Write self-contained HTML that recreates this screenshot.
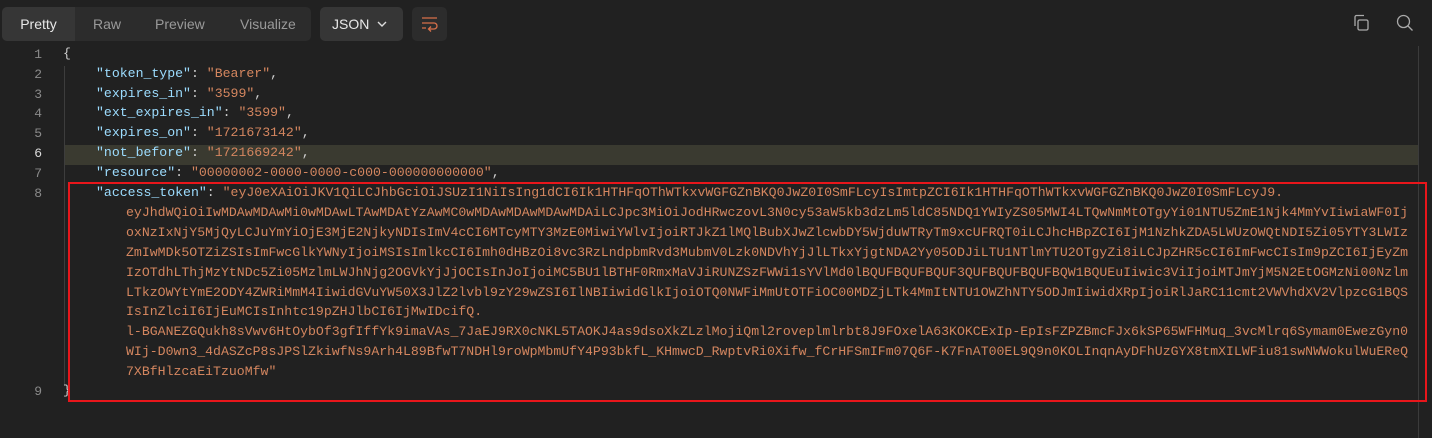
<!DOCTYPE html>
<html><head><meta charset="utf-8"><style>
html,body{margin:0;padding:0;width:1432px;height:438px;background:#212121;overflow:hidden}
body{position:relative;font-family:"Liberation Sans",sans-serif}
.tabs{position:absolute;left:2px;top:7px;width:309px;height:34px;background:#2c2c2c;border-radius:5px}
.tab{position:absolute;top:0;height:34px;line-height:34px;font-size:14px;color:#9a9a9a}
.tab.on{left:0;width:73px;background:#363636;border-radius:5px 0 0 5px;color:#e8e8e8;text-align:center}
.json{position:absolute;left:320px;top:7px;width:83px;height:34px;background:#363636;border-radius:5px;color:#e8e8e8;font-size:14px;line-height:34px}
.wrap{position:absolute;left:412px;top:7px;width:35px;height:34px;background:#2c2c2c;border-radius:5px}
.ln{position:absolute;left:0;width:42px;text-align:right;color:#8a8a8a;font-family:"Liberation Mono",monospace;font-size:13px}
.c{position:absolute;font-family:"Liberation Mono",monospace;font-size:13.2px;white-space:pre;color:#cfcfcf;letter-spacing:0.0px}
.k{color:#9cdcfe}.s{color:#d4865f}
.hl{position:absolute;left:64px;top:145px;width:1354px;height:20px;background:#3a3a30}
.guide{position:absolute;left:64px;top:66px;width:1px;height:320px;background:#3d3d3d}
.box{position:absolute;left:68px;top:182px;width:1355px;height:216px;border:2px solid #e8161b}
.sb{position:absolute;left:1418px;top:46px;width:1px;height:392px;background:#3b3b3b}
</style></head><body>
<div class="tabs">
<div class="tab on">Pretty</div>
<div class="tab" style="left:91px">Raw</div>
<div class="tab" style="left:153px">Preview</div>
<div class="tab" style="left:238px">Visualize</div>
</div>
<div class="json"><span style="margin-left:12px">JSON</span>
<svg style="position:absolute;left:57px;top:13px" width="10" height="8" viewBox="0 0 10 8"><path d="M1 2l4 4 4-4" fill="none" stroke="#ddd" stroke-width="1.4"/></svg></div>
<div class="wrap"><svg style="position:absolute;left:9px;top:9px" width="17" height="16" viewBox="0 0 17 16"><path d="M1 2h15M1 7h12a3 3 0 010 6H8M10 10.5l-2.5 2.5 2.5 2.5M1 12h4" fill="none" stroke="#d7704a" stroke-width="1.3"/></svg></div>
<svg style="position:absolute;left:1353px;top:14px" width="17" height="18" viewBox="0 0 17 18"><rect x="5" y="6" width="10" height="10" rx="1.5" fill="none" stroke="#aaa" stroke-width="1.3"/><path d="M2 12V3a1.5 1.5 0 011.5-1.5H11" fill="none" stroke="#aaa" stroke-width="1.3"/></svg>
<svg style="position:absolute;left:1396px;top:14px" width="18" height="18" viewBox="0 0 18 18"><circle cx="7.5" cy="7.5" r="6" fill="none" stroke="#aaa" stroke-width="1.3"/><path d="M12 12l4.5 4.5" stroke="#aaa" stroke-width="1.3"/></svg>
<div class="sb"></div>
<div class="hl"></div>
<div class="guide"></div>
<div class="ln" style="top:47px">1</div>
<div class="ln" style="top:67px">2</div>
<div class="ln" style="top:87px">3</div>
<div class="ln" style="top:106px">4</div>
<div class="ln" style="top:126px">5</div>
<div class="ln" style="top:146px;color:#ddd">6</div>
<div class="ln" style="top:166px">7</div>
<div class="ln" style="top:186px">8</div>
<div class="ln" style="top:384px">9</div>
<div class="c" style="left:63px;top:46px">{</div>
<div class="c" style="left:96px;top:66px"><span class="k">"token_type"</span>: <span class="s">"Bearer"</span>,</div>
<div class="c" style="left:96px;top:86px"><span class="k">"expires_in"</span>: <span class="s">"3599"</span>,</div>
<div class="c" style="left:96px;top:105px"><span class="k">"ext_expires_in"</span>: <span class="s">"3599"</span>,</div>
<div class="c" style="left:96px;top:125px"><span class="k">"expires_on"</span>: <span class="s">"1721673142"</span>,</div>
<div class="c" style="left:96px;top:145px"><span class="k">"not_before"</span>: <span class="s">"1721669242"</span>,</div>
<div class="c" style="left:96px;top:165px"><span class="k">"resource"</span>: <span class="s">"00000002-0000-0000-c000-000000000000"</span>,</div>
<div class="c" style="left:96px;top:185px"><span class="k">"access_token"</span>: <span class="s">"eyJ0eXAiOiJKV1QiLCJhbGciOiJSUzI1NiIsIng1dCI6Ik1HTHFqOThWTkxvWGFGZnBKQ0JwZ0I0SmFLcyIsImtpZCI6Ik1HTHFqOThWTkxvWGFGZnBKQ0JwZ0I0SmFLcyJ9.</span></div>
<div class="c s" style="left:126px;top:205px">eyJhdWQiOiIwMDAwMDAwMi0wMDAwLTAwMDAtYzAwMC0wMDAwMDAwMDAwMDAiLCJpc3MiOiJodHRwczovL3N0cy53aW5kb3dzLm5ldC85NDQ1YWIyZS05MWI4LTQwNmMtOTgyYi01NTU5ZmE1Njk4MmYvIiwiaWF0Ij</div>
<div class="c s" style="left:126px;top:225px">oxNzIxNjY5MjQyLCJuYmYiOjE3MjE2NjkyNDIsImV4cCI6MTcyMTY3MzE0MiwiYWlvIjoiRTJkZ1lMQlBubXJwZlcwbDY5WjduWTRyTm9xcUFRQT0iLCJhcHBpZCI6IjM1NzhkZDA5LWUzOWQtNDI5Zi05YTY3LWIz</div>
<div class="c s" style="left:126px;top:245px">ZmIwMDk5OTZiZSIsImFwcGlkYWNyIjoiMSIsImlkcCI6Imh0dHBzOi8vc3RzLndpbmRvd3MubmV0Lzk0NDVhYjJlLTkxYjgtNDA2Yy05ODJiLTU1NTlmYTU2OTgyZi8iLCJpZHR5cCI6ImFwcCIsIm9pZCI6IjEyZm</div>
<div class="c s" style="left:126px;top:265px">IzOTdhLThjMzYtNDc5Zi05MzlmLWJhNjg2OGVkYjJjOCIsInJoIjoiMC5BU1lBTHF0RmxMaVJiRUNZSzFWWi1sYVlMd0lBQUFBQUFBQUF3QUFBQUFBQUFBQW1BQUEuIiwic3ViIjoiMTJmYjM5N2EtOGMzNi00Nzlm</div>
<div class="c s" style="left:126px;top:285px">LTkzOWYtYmE2ODY4ZWRiMmM4IiwidGVuYW50X3JlZ2lvbl9zY29wZSI6IlNBIiwidGlkIjoiOTQ0NWFiMmUtOTFiOC00MDZjLTk4MmItNTU1OWZhNTY5ODJmIiwidXRpIjoiRlJaRC11cmt2VWVhdXV2VlpzcG1BQS</div>
<div class="c s" style="left:126px;top:304px">IsInZlciI6IjEuMCIsInhtc19pZHJlbCI6IjMwIDcifQ.</div>
<div class="c s" style="left:126px;top:324px">l-BGANEZGQukh8sVwv6HtOybOf3gfIffYk9imaVAs_7JaEJ9RX0cNKL5TAOKJ4as9dsoXkZLzlMojiQml2roveplmlrbt8J9FOxelA63KOKCExIp-EpIsFZPZBmcFJx6kSP65WFHMuq_3vcMlrq6Symam0EwezGyn0</div>
<div class="c s" style="left:126px;top:344px">WIj-D0wn3_4dASZcP8sJPSlZkiwfNs9Arh4L89BfwT7NDHl9roWpMbmUfY4P93bkfL_KHmwcD_RwptvRi0Xifw_fCrHFSmIFm07Q6F-K7FnAT00EL9Q9n0KOLInqnAyDFhUzGYX8tmXILWFiu81swNWWokulWuEReQ</div>
<div class="c s" style="left:126px;top:364px">7XBfHlzcaEiTzuoMfw"</div>
<div class="c" style="left:63px;top:383px">}</div>
<div class="box"></div>
</body></html>
